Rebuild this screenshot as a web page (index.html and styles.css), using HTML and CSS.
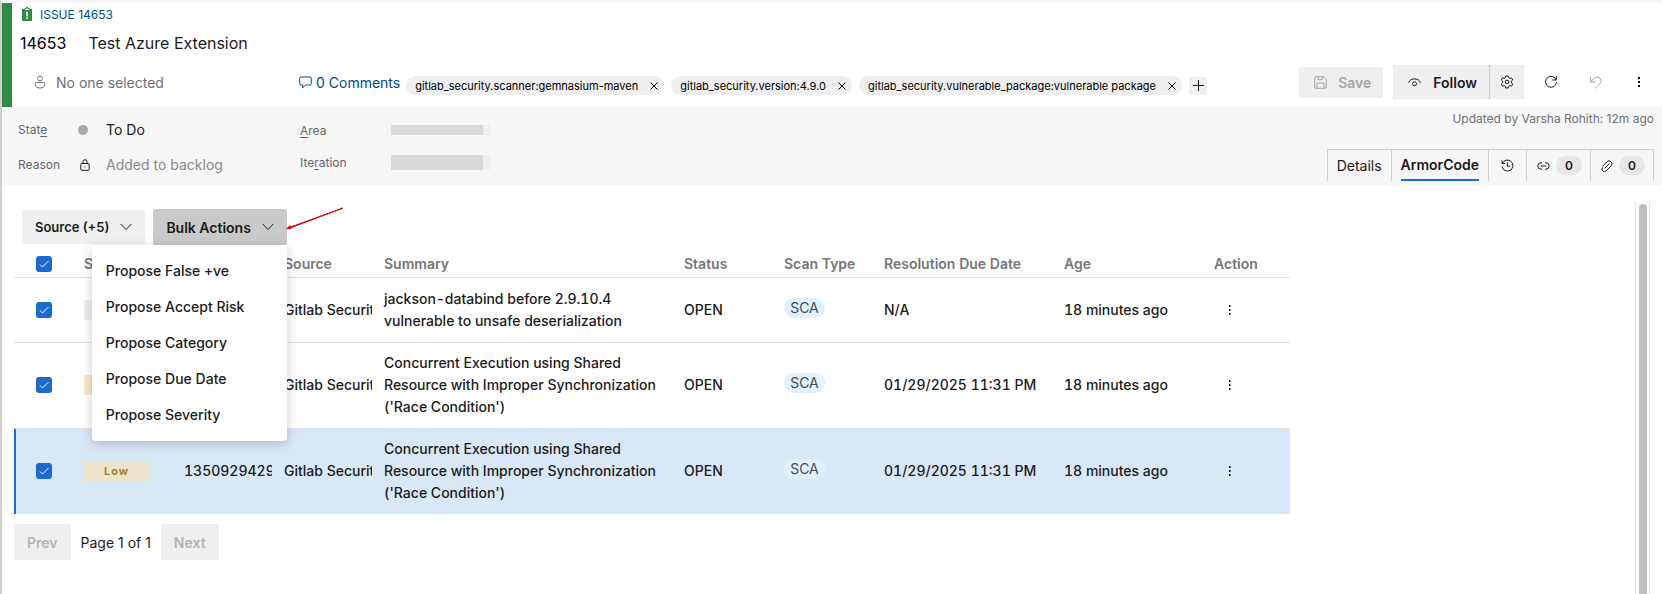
FILE: index.html
```html
<!DOCTYPE html>
<html lang="en">
<head>
<meta charset="UTF-8" />
<meta name="viewport" content="width=device-width, initial-scale=1" />
<title>Issue 14653 - Test Azure Extension</title>
<link rel="stylesheet" href="styles.css">
</head>
<body>

<div class="work-item">
  <header class="item-header">
    <a class="issue-link" href="#">
      <svg width="12" height="14" viewBox="0 0 12 14" aria-hidden="true">
        <path fill="#2e8b41" d="M1 2h2.500V1h1.500V0h2v1h1.500v1H11v12H1z"/>
        <path fill="#fff" d="M4 2h1V1.500h2V2h1v1H4zM5.200 4.500h1.600v5H5.200zM5.200 10.500h1.600V12H5.200z"/>
      </svg>
      ISSUE 14653
    </a>

    <div class="title-row">
      <span class="item-id">14653</span>
      <h1>Test Azure Extension</h1>
    </div>

    <div class="meta-row">
      <div class="assignee">
        <svg class="icon" width="12" height="14" viewBox="0 0 12 14" aria-hidden="true">
          <circle cx="6" cy="3.500" r="2.500"/>
          <path d="M2.500 7.500h7a1.300 1.300 0 0 1 1.300 1.300c0 2.800-2 4.200-4.800 4.200S1.200 11.600 1.200 8.800a1.300 1.300 0 0 1 1.300-1.300z"/>
        </svg>
        No one selected
      </div>

      <a class="comments" href="#">
        <svg class="icon" width="13" height="13" viewBox="0 0 13 13" aria-hidden="true">
          <path d="M2 1h9a1.300 1.300 0 0 1 1.300 1.300v5.400A1.300 1.300 0 0 1 11 9H6.500L3.500 12V9H2A1.300 1.300 0 0 1 .700 7.700V2.300A1.300 1.300 0 0 1 2 1z"/>
        </svg>
        0 Comments
      </a>

      <div class="tags">
        <span class="tag">gitlab_security.scanner:gemnasium-maven
          <button type="button" aria-label="Remove tag"><svg class="icon" width="8" height="8" viewBox="0 0 8 8"><path d="M.500.500l7 7M7.500.500l-7 7"/></svg></button>
        </span>
        <span class="tag">gitlab_security.version:4.9.0
          <button type="button" aria-label="Remove tag"><svg class="icon" width="8" height="8" viewBox="0 0 8 8"><path d="M.500.500l7 7M7.500.500l-7 7"/></svg></button>
        </span>
        <span class="tag">gitlab_security.vulnerable_package:vulnerable package
          <button type="button" aria-label="Remove tag"><svg class="icon" width="8" height="8" viewBox="0 0 8 8"><path d="M.500.500l7 7M7.500.500l-7 7"/></svg></button>
        </span>
        <button class="add-tag" type="button" aria-label="Add tag"><svg class="icon" width="11" height="11" viewBox="0 0 11 11"><path d="M5.500 0v11M0 5.500h11"/></svg></button>
      </div>

      <div class="commands">
        <button class="btn save" type="button" disabled>
          <svg class="icon" width="13" height="13" viewBox="0 0 13 13" aria-hidden="true">
            <path d="M2 .700h7.500l2.800 2.800V11a1.300 1.300 0 0 1-1.300 1.300H2A1.300 1.300 0 0 1 .700 11V2A1.300 1.300 0 0 1 2 .700zM4 .700v3h4.500v-3M3 12.300V7h7v5.300"/>
          </svg>
          Save
        </button>
        <div class="follow-group">
          <button class="btn follow" type="button">
            <svg class="icon" width="13" height="9" viewBox="0 0 13 9" aria-hidden="true">
              <path d="M.600 4.800C1.400 2.200 3.700.900 6.500.900s5.100 1.300 5.900 3.900"/>
              <circle cx="6.500" cy="5.800" r="2"/>
            </svg>
            Follow
          </button>
          <button class="btn settings" type="button" aria-label="Follow settings">
            <svg class="icon" width="14" height="14" viewBox="0 0 14 14">
              <path d="M5.800 1h2.400l.400 1.700 1.200.700 1.700-.500 1.200 2.100L11.400 6.200v1.600l1.300 1.200-1.200 2.100-1.700-.500-1.200.700L8.200 13H5.800l-.400-1.700-1.200-.700-1.700.500L1.300 9l1.300-1.200V6.200L1.300 5l1.200-2.100 1.700.500 1.200-.700z"/>
              <circle cx="7" cy="7" r="1.800"/>
            </svg>
          </button>
        </div>
        <button class="icon-btn" type="button" aria-label="Refresh">
          <svg class="icon" width="14" height="14" viewBox="0 0 14 14">
            <path d="M12.200 5A5.500 5.500 0 1 0 12.500 7M12.300 1v4H8.300"/>
          </svg>
        </button>
        <button class="icon-btn" type="button" aria-label="Undo" disabled>
          <svg class="icon" width="13" height="13" viewBox="0 0 13 13">
            <path d="M1.500 1v5h5M1.500 6L5.300 2.300a3.800 3.800 0 0 1 5.600 0 3.800 3.800 0 0 1 0 5.300L6 12.400"/>
          </svg>
        </button>
        <button class="icon-btn" type="button" aria-label="More actions">
          <svg width="4" height="12" viewBox="0 0 4 12"><path d="M1 1h2v2H1zM1 5h2v2H1zM1 9h2v2H1z"/></svg>
        </button>
      </div>
    </div>
  </header>

  <section class="fields">
    <dl class="field-list">
      <dt>Stat<u>e</u></dt>
      <dd class="state"><span class="state-dot"></span>To Do</dd>
      <dt>Reason</dt>
      <dd class="reason">
        <svg class="icon" width="10" height="12" viewBox="0 0 10 12" aria-hidden="true">
          <path d="M1.800 4.500h6.400a1 1 0 0 1 1 1v4.800a1 1 0 0 1-1 1H1.800a1 1 0 0 1-1-1V5.500a1 1 0 0 1 1-1zM3 4.500V2.700a2 2 0 0 1 4 0v1.800M4.500 7.900h1"/>
        </svg>
        Added to backlog
      </dd>
    </dl>
    <dl class="field-list paths">
      <dt><u>A</u>rea</dt>
      <dd><span class="redacted"></span></dd>
      <dt>Ite<u>r</u>ation</dt>
      <dd><span class="redacted tall"></span></dd>
    </dl>

    <div class="fields-right">
      <p class="updated">Updated by Varsha Rohith: 12m ago</p>
      <nav class="tabs">
        <a href="#">Details</a>
        <a class="active" href="#" aria-current="page"><span>ArmorCode</span></a>
        <a href="#" aria-label="History">
          <svg class="icon" width="13" height="13" viewBox="0 0 13 13">
            <path d="M1 1.300v3.200h3.200M1.400 4.300A5.500 5.500 0 1 1 1 7.500M6.300 3.500v3.700H9"/>
          </svg>
        </a>
        <a href="#" aria-label="Links">
          <svg class="icon" width="13" height="8" viewBox="0 0 13 8">
            <path d="M5 7.200H4A3.200 3.200 0 0 1 4 .800h1M8 .800h1a3.200 3.200 0 0 1 0 6.400H8M3.800 4h5.400"/>
          </svg>
          <span class="count">0</span>
        </a>
        <a href="#" aria-label="Attachments">
          <svg class="icon" width="12" height="12" viewBox="0 0 12 12">
            <path d="M3.800 8.200L8.400 3.600M1.300 6.400L5.900 1.800a2.800 2.800 0 0 1 4.200 0 2.800 2.800 0 0 1 0 4.100L5.300 10.700a2.300 2.300 0 0 1-3.600 0 2.300 2.300 0 0 1 0-3.300"/>
          </svg>
          <span class="count">0</span>
        </a>
      </nav>
    </div>
  </section>

  <main class="content">
    <div class="findings">
      <div class="toolbar">
        <button class="btn source" type="button">Source (+5)
          <svg class="icon" width="12" height="8" viewBox="0 0 12 8" aria-hidden="true"><path d="M.700 1L6 6.500 11.300 1"/></svg>
        </button>
        <div class="dropdown">
          <button class="btn open" type="button" aria-haspopup="menu" aria-expanded="true">Bulk Actions
            <svg class="icon" width="12" height="8" viewBox="0 0 12 8" aria-hidden="true"><path d="M.700 1L6 6.500 11.300 1"/></svg>
          </button>
          <div class="menu" role="menu">
            <button type="button" role="menuitem">Propose False +ve</button>
            <button type="button" role="menuitem">Propose Accept Risk</button>
            <button type="button" role="menuitem">Propose Category</button>
            <button type="button" role="menuitem">Propose Due Date</button>
            <button type="button" role="menuitem">Propose Severity</button>
          </div>
          <svg class="pointer" width="60" height="26" viewBox="0 0 60 26" aria-hidden="true">
            <path d="M2 22L56 2" stroke="#7a3030" stroke-width="1"/>
            <path d="M2 22L28 12.400" stroke="#e00000" stroke-width="1.500"/>
            <path d="M28 12.400L56 2" stroke="#e00000" stroke-width="1.500" stroke-dasharray="2 1"/>
            <path d="M-1 23l4-4 1.500 4z" fill="#e00000"/>
          </svg>
        </div>
      </div>

      <table>
        <colgroup>
          <col class="col-check"><col class="col-md"><col class="col-md"><col class="col-md"><col class="col-summary">
          <col class="col-md"><col class="col-md"><col class="col-date"><col class="col-age"><col class="col-action">
        </colgroup>
        <thead>
          <tr>
            <th class="check"><input type="checkbox" aria-label="Select all" checked></th>
            <th>Severity</th>
            <th>ID</th>
            <th>Source</th>
            <th>Summary</th>
            <th>Status</th>
            <th>Scan Type</th>
            <th>Resolution Due Date</th>
            <th>Age</th>
            <th>Action</th>
          </tr>
        </thead>
        <tbody>
          <tr>
            <td class="check"><input type="checkbox" aria-label="Select finding 1" checked></td>
            <td><span class="severity info"></span></td>
            <td></td>
            <td><span class="clip">Gitlab Security</span></td>
            <td>jackson-databind before 2.9.10.4 vulnerable to unsafe deserialization</td>
            <td>OPEN</td>
            <td><span class="scan">SCA</span></td>
            <td>N/A</td>
            <td>18 minutes ago</td>
            <td><button class="row-menu" type="button" aria-label="Row actions"><svg width="2" height="10" viewBox="0 0 2 10"><path d="M0 0h1.500v2H0zM0 4h1.500v2H0zM0 8h1.500v2H0z"/></svg></button></td>
          </tr>
          <tr>
            <td class="check"><input type="checkbox" aria-label="Select finding 2" checked></td>
            <td><span class="severity low"></span></td>
            <td></td>
            <td><span class="clip">Gitlab Security</span></td>
            <td>Concurrent Execution using Shared Resource with Improper Synchronization ('Race Condition')</td>
            <td>OPEN</td>
            <td><span class="scan">SCA</span></td>
            <td>01/29/2025 11:31 PM</td>
            <td>18 minutes ago</td>
            <td><button class="row-menu" type="button" aria-label="Row actions"><svg width="2" height="10" viewBox="0 0 2 10"><path d="M0 0h1.500v2H0zM0 4h1.500v2H0zM0 8h1.500v2H0z"/></svg></button></td>
          </tr>
          <tr class="selected">
            <td class="check"><input type="checkbox" aria-label="Select finding 3" checked></td>
            <td><span class="severity low">Low</span></td>
            <td><span class="clip">13509294290</span></td>
            <td><span class="clip">Gitlab Security</span></td>
            <td>Concurrent Execution using Shared Resource with Improper Synchronization ('Race Condition')</td>
            <td>OPEN</td>
            <td><span class="scan">SCA</span></td>
            <td>01/29/2025 11:31 PM</td>
            <td>18 minutes ago</td>
            <td><button class="row-menu" type="button" aria-label="Row actions"><svg width="2" height="10" viewBox="0 0 2 10"><path d="M0 0h1.500v2H0zM0 4h1.500v2H0zM0 8h1.500v2H0z"/></svg></button></td>
          </tr>
        </tbody>
      </table>

      <div class="pagination">
        <button class="btn" type="button" disabled>Prev</button>
        <span>Page 1 of 1</span>
        <button class="btn" type="button" disabled>Next</button>
      </div>
    </div>

    <div class="scroll-track" aria-hidden="true"><div class="scroll-thumb"></div></div>
  </main>
</div>

</body>
</html>
```
FILE: styles.css
```css
* {
  box-sizing: border-box;
}

body {
  margin: 0;
  font-family: Inter, "Liberation Sans", sans-serif;
  font-size: 14px;
  color: #1b1b1b;
  background: #fff;
}

button {
  font: inherit;
  color: inherit;
  border: none;
  background: none;
  padding: 0;
  cursor: pointer;
}

a {
  color: inherit;
  text-decoration: none;
}

.icon {
  fill: none;
  stroke: currentColor;
  stroke-width: 1;
  flex-shrink: 0;
}

.work-item {
  min-height: 100vh;
  display: flex;
  flex-direction: column;
  border-left: 2px solid #d0d0d0;
  border-top: 3px solid #f7f7f7;
}

/* Header */
.item-header {
  border-left: 10px solid #2e8b41;
  padding: 3px 8px 7px;
}

.issue-link {
  display: flex;
  align-items: center;
  gap: 7px;
  height: 16px;
  padding-left: 1px;
  font-size: 12px;
  color: #004b94;
}

.title-row {
  display: flex;
  align-items: center;
  gap: 22px;
  height: 42px;
  font-size: 16px;
}

.title-row h1 {
  margin: 0;
  font-size: 16px;
  font-weight: 400;
}

.item-id {
  color: #000;
}

.meta-row {
  display: flex;
  align-items: center;
  height: 36px;
}

.assignee {
  display: flex;
  align-items: center;
  gap: 10px;
  width: 279px;
  padding-left: 14px;
  color: #707070;
}

.comments {
  display: flex;
  align-items: center;
  gap: 4px;
  color: #004b94;
}

.tags {
  display: flex;
  align-items: center;
  gap: 7px;
  margin-left: 6px;
  padding-top: 7px;
  white-space: nowrap;
}

.tag {
  display: flex;
  align-items: center;
  gap: 12px;
  height: 19px;
  padding: 0 6px 0 9px;
  border-radius: 10px;
  background: #efefef;
  color: #000;
  font-size: 11px;
}

.tag button {
  display: flex;
}

.add-tag {
  display: flex;
  align-items: center;
  justify-content: center;
  width: 18px;
  height: 18px;
  border-radius: 2px;
  background: #efefef;
}

.commands {
  display: flex;
  align-items: center;
  margin-left: auto;
}

.btn {
  display: flex;
  align-items: center;
  height: 34px;
  padding: 0 13px;
  border-radius: 2px;
  background: #efefef;
  font-weight: 600;
}

.btn:disabled {
  color: #a6a6a6;
  cursor: default;
}

.save {
  gap: 11px;
  height: 31px;
  padding: 0 12px 0 15px;
  margin-right: 10px;
}

.follow-group {
  display: flex;
  gap: 1px;
  margin-right: 10px;
  background: #c8c8c8;
}

.follow {
  gap: 12px;
  padding: 0 12px 0 15px;
}

.settings {
  width: 34px;
  padding: 0;
  justify-content: center;
}

.icon-btn {
  display: flex;
  align-items: center;
  justify-content: center;
  width: 34px;
  height: 34px;
}

.icon-btn + .icon-btn {
  margin-left: 10px;
}

.icon-btn:last-child {
  margin-right: -2px;
}

.icon-btn:disabled {
  color: #a6a6a6;
}

/* State, reason and paths */
.fields {
  display: flex;
  height: 78px;
  padding: 0 8px 0 16px;
  background: #f7f7f7;
}

.field-list {
  display: grid;
  grid-template-columns: 60px 1fr;
  grid-auto-rows: 35px;
  align-items: center;
  width: 282px;
  margin: 0;
  padding-top: 5px;
}

.field-list dt {
  font-size: 12px;
  color: #666;
}

.field-list dd {
  display: flex;
  align-items: center;
  margin: 0;
}

.field-list u {
  text-underline-offset: 2px;
}

.state-dot {
  width: 10px;
  height: 10px;
  margin-right: 18px;
  border-radius: 50%;
  background: #a8a8a8;
}

.reason {
  color: #8a8a8a;
}

.reason .icon {
  margin: 0 16px 0 2px;
  color: #1b1b1b;
}

.paths {
  grid-template-columns: 91px 1fr;
  grid-auto-rows: 32px;
  padding-top: 7px;
}

.redacted {
  width: 99px;
  height: 10px;
  background: linear-gradient(to right, #d9d9d9 92px, #efefef 92px);
}

.redacted.tall {
  height: 15px;
}

.fields-right {
  display: flex;
  flex-direction: column;
  justify-content: space-between;
  align-items: flex-end;
  margin-left: auto;
  padding-bottom: 4px;
}

.updated {
  margin: 4px 0 0;
  font-size: 12px;
  line-height: 16px;
  color: #707070;
}

.tabs {
  display: flex;
  height: 32px;
  border: 1px solid #d0d0d0;
  border-bottom: none;
}

.tabs a {
  display: flex;
  align-items: center;
  gap: 6px;
  padding: 0 9px;
}

.tabs a + a {
  border-left: 1px solid #d0d0d0;
}

.tabs a:nth-child(3) {
  padding: 0 12px;
}

.tabs a:nth-child(n+4) {
  padding: 0 8px 0 10px;
}

.tabs .active {
  font-weight: 600;
}

.active span {
  display: flex;
  align-items: center;
  height: 100%;
  border-bottom: 2px solid #1a6bd0;
}

.count {
  width: 26px;
  border-radius: 10px;
  background: #e6e6e6;
  font-size: 12px;
  font-weight: 600;
  line-height: 19px;
  text-align: center;
}

/* Findings */
.content {
  flex: 1;
  display: flex;
  justify-content: space-between;
  padding: 16px 12px 0;
}

.findings {
  padding-top: 8px;
}

.toolbar {
  display: flex;
  align-items: center;
  gap: 8px;
  padding-left: 8px;
}

.toolbar .btn {
  gap: 11px;
}

.source {
  font-size: 13px;
}

.dropdown {
  position: relative;
}

.toolbar .open {
  height: 36px;
  background: #c9c9c9;
}

.menu {
  position: absolute;
  top: 100%;
  right: 0;
  z-index: 1;
  display: flex;
  flex-direction: column;
  width: 195px;
  padding: 7px 0 9px;
  border-radius: 0 0 4px 4px;
  background: #fff;
  box-shadow: 0 3px 12px rgba(0, 0, 0, 0.2);
}

.menu button {
  height: 36px;
  padding: 0 14px;
  font-weight: 500;
  font-variant-numeric: tabular-nums;
  text-align: left;
}

.pointer {
  position: absolute;
  top: -3px;
  left: 100%;
  overflow: visible;
  fill: none;
}

table {
  width: 1276px;
  table-layout: fixed;
  border-collapse: separate;
  border-spacing: 0;
  font-weight: 500;
  font-variant-numeric: tabular-nums;
  line-height: 22px;
}

.col-check { width: 64px; }
.col-md { width: 100px; }
.col-summary { width: 300px; }
.col-date { width: 180px; }
.col-age { width: 150px; }
.col-action { width: 82px; }

tbody tr {
  height: 65px;
}

th, td {
  padding: 9px 6px 10px;
  border-bottom: 1px solid #e2e2e2;
  text-align: left;
}

th {
  padding: 8px 6px 2px;
  font-weight: 600;
  color: #767676;
  white-space: nowrap;
}

.check {
  padding-left: 22px;
}

.clip {
  display: block;
  overflow: hidden;
  white-space: nowrap;
}

input[type="checkbox"] {
  appearance: none;
  display: block;
  width: 16px;
  height: 16px;
  margin: 0;
  border-radius: 3px;
  background: #1a6bd0 url("data:image/svg+xml,%3Csvg xmlns='http://www.w3.org/2000/svg' viewBox='0 0 16 16'%3E%3Cpath d='M4 8.500l2.500 2.500L12.500 5' fill='none' stroke='white'/%3E%3C/svg%3E");
}

.selected td {
  border-bottom: none;
  background: #d9e8f7;
}

.selected .check {
  padding-left: 20px;
  border-left: 2px solid #1a6bd0;
}

.severity {
  display: block;
  width: 65px;
  height: 20px;
  font-size: 11px;
  font-weight: 700;
  letter-spacing: 1px;
  line-height: 20px;
  text-align: center;
}

.info {
  background: #efefef;
}

.low {
  background: #f8ebcb;
  color: #b07d2b;
}

.selected .low {
  background: #ece4cb;
}

.scan {
  display: block;
  width: 41px;
  margin-bottom: 4px;
  border-radius: 10px;
  background: #dff1ff;
  color: #4a4a4a;
  font-weight: 400;
  line-height: 20px;
  text-align: center;
}

.row-menu {
  display: flex;
  padding: 6px 15px;
}

.pagination {
  display: flex;
  align-items: center;
  gap: 10px;
  margin-top: 10px;
}

.pagination .btn {
  height: 36px;
}

.pagination .btn:disabled {
  color: #b5b5b5;
}

/* Scrollbar */
.scroll-track {
  width: 15px;
  padding: 3px 3px 0;
  border: 1px solid #e6e6e6;
  border-width: 0 1px;
  background: #fafafa;
}

.scroll-thumb {
  width: 8px;
  height: 100%;
  border-radius: 4px 4px 0 0;
  background: #c0c0c0;
}
```
